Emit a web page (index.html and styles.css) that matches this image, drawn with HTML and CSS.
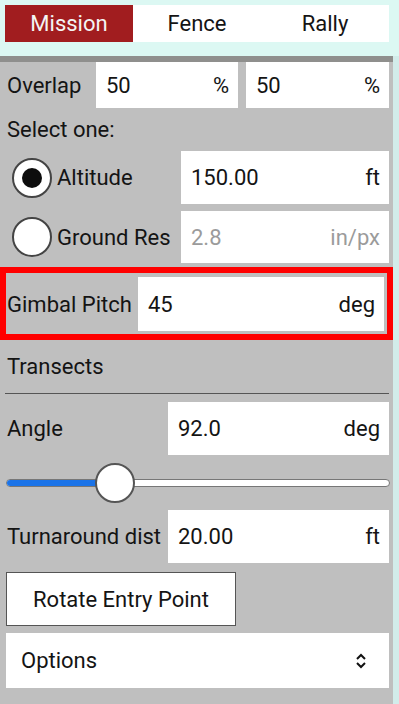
FILE: index.html
```html
<!DOCTYPE html>
<html>
<head>
<meta charset="utf-8">
<link rel="stylesheet" href="styles.css">
</head>
<body>
<div class="top">
  <div class="tabs">
    <div class="tab active">Mission</div>
    <div class="tab">Fence</div>
    <div class="tab">Rally</div>
  </div>
</div>
<div class="wrap">
<div class="panel">
  <div class="row overlap">
    <span class="label">Overlap</span>
    <div class="field f-half"><span>50</span><span>%</span></div>
    <div class="field f-half"><span>50</span><span>%</span></div>
  </div>
  <div class="select-label">Select one:</div>
  <div class="row r-alt">
    <div class="radio-item"><span class="radio on"></span><span class="label">Altitude</span></div>
    <div class="field f-right"><span>150.00</span><span>ft</span></div>
  </div>
  <div class="row r-gr">
    <div class="radio-item"><span class="radio"></span><span class="label">Ground Res</span></div>
    <div class="field f-right disabled"><span>2.8</span><span>in/px</span></div>
  </div>
  <div class="highlight">
    <span class="label">Gimbal Pitch</span>
    <div class="field f-gimbal"><span>45</span><span>deg</span></div>
  </div>
  <div class="section">Transects</div>
  <div class="rule"></div>
  <div class="row r-angle">
    <span class="label">Angle</span>
    <div class="field f-mid"><span>92.0</span><span>deg</span></div>
  </div>
  <div class="slider">
    <div class="track"><div class="fill" style="width: 25%"></div></div>
    <div class="thumb" style="left: 89px"></div>
  </div>
  <div class="row r-turn">
    <span class="label">Turnaround dist</span>
    <div class="field f-mid"><span>20.00</span><span>ft</span></div>
  </div>
  <div class="button">Rotate Entry Point</div>
  <div class="combo">
    <span>Options</span>
    <svg class="chev" width="12" height="18" viewBox="0 0 12 18"><path d="M2 7 L6 3 L10 7 M2 11 L6 15 L10 11" fill="none" stroke="#111" stroke-width="2"/></svg>
  </div>
</div>
<div class="edge"></div>
</div>
</body>
</html>
```
FILE: styles.css
```css
html, body {
  margin: 0;
  padding: 0;
}
body {
  width: 399px;
  height: 704px;
  overflow: hidden;
  background: #dcf8f3;
  font-family: Roboto, "Noto Sans", sans-serif;
  font-size: 22px;
  color: #141414;
}
.top {
  height: 56px;
  padding: 5px 10px 0 5px;
  box-sizing: border-box;
}
.tabs {
  display: flex;
  height: 37px;
  background: #ffffff;
}
.tab {
  flex: 1;
  display: flex;
  align-items: center;
  justify-content: center;
  font-size: 22px;
}
.tab.active {
  flex: 0 0 128px;
  background: #a11d1f;
  color: #f4f4f4;
}
.wrap {
  display: flex;
  height: 648px;
}
.panel {
  width: 393px;
  background: #bfbfbf;
  border-top: 6px solid #8f8f8d;
  box-sizing: border-box;
  display: flex;
  flex-direction: column;
}
.edge {
  flex: 1;
  background: #d2ecea;
}
.row {
  display: flex;
  align-items: center;
  padding: 0 4px 0 7px;
}
.field {
  background: #fff;
  display: flex;
  justify-content: space-between;
  align-items: center;
  padding: 0 9px 0 10px;
  box-sizing: border-box;
  height: 100%;
}
.overlap {
  height: 46px;
}
.overlap .label {
  width: 89px;
}
.f-half {
  width: 142px;
}
.f-half + .f-half {
  margin-left: 8px;
  width: 143px;
}
.select-label {
  height: 43px;
  display: flex;
  align-items: center;
  padding-left: 7px;
}
.r-alt {
  height: 53px;
  padding-left: 12px;
}
.r-gr {
  height: 52px;
  margin-top: 7px;
  padding-left: 12px;
}
.radio-item {
  display: flex;
  align-items: center;
  width: 169px;
}
.radio {
  width: 40px;
  height: 40px;
  border-radius: 50%;
  border: 2px solid #444;
  background: #fff;
  box-sizing: border-box;
  margin-right: 5px;
  flex: none;
  display: flex;
  align-items: center;
  justify-content: center;
}
.radio.on::after {
  content: "";
  width: 20px;
  height: 20px;
  border-radius: 50%;
  background: #0d0d0d;
}
.f-right {
  width: 208px;
}
.disabled {
  color: #9b9b9b;
}
.highlight {
  margin-top: 4px;
  height: 73px;
  border: 6px solid #ff0000;
  box-sizing: border-box;
  display: flex;
  align-items: center;
  padding: 1px 3px 0 1px;
}
.highlight .label {
  width: 131px;
  padding-left: 0;
}
.f-gimbal {
  flex: 1;
  height: 54px;
}
.section {
  height: 53px;
  display: flex;
  align-items: center;
  padding-left: 7px;
}
.rule {
  height: 1px;
  background: #555;
  margin: 0 4px 0 5px;
}
.r-angle {
  margin-top: 8px;
  height: 53px;
}
.r-angle .label, .r-turn .label {
  width: 161px;
  white-space: nowrap;
}
.f-mid {
  width: 221px;
}
.slider {
  position: relative;
  height: 55px;
  margin: 0 3px 0 6px;
  display: flex;
  align-items: center;
}
.track {
  flex: 1;
  height: 6px;
  background: #fff;
  border: 1px solid #777;
  border-radius: 4px;
  overflow: hidden;
}
.fill {
  height: 100%;
  background: #1a73e8;
}
.thumb {
  position: absolute;
  top: 8px;
  width: 40px;
  height: 40px;
  border-radius: 50%;
  background: #fff;
  border: 2px solid #555;
  box-sizing: border-box;
}
.r-turn {
  height: 53px;
}
.button {
  margin: 9px 0 0 6px;
  width: 230px;
  height: 54px;
  box-sizing: border-box;
  background: #fff;
  border: 1px solid #555;
  display: flex;
  align-items: center;
  justify-content: center;
}
.combo {
  margin: 7px 4px 0 6px;
  height: 55px;
  background: #fff;
  display: flex;
  align-items: center;
  justify-content: space-between;
  padding: 0 22px 0 15px;
}
.chev {
  display: block;
}
```
